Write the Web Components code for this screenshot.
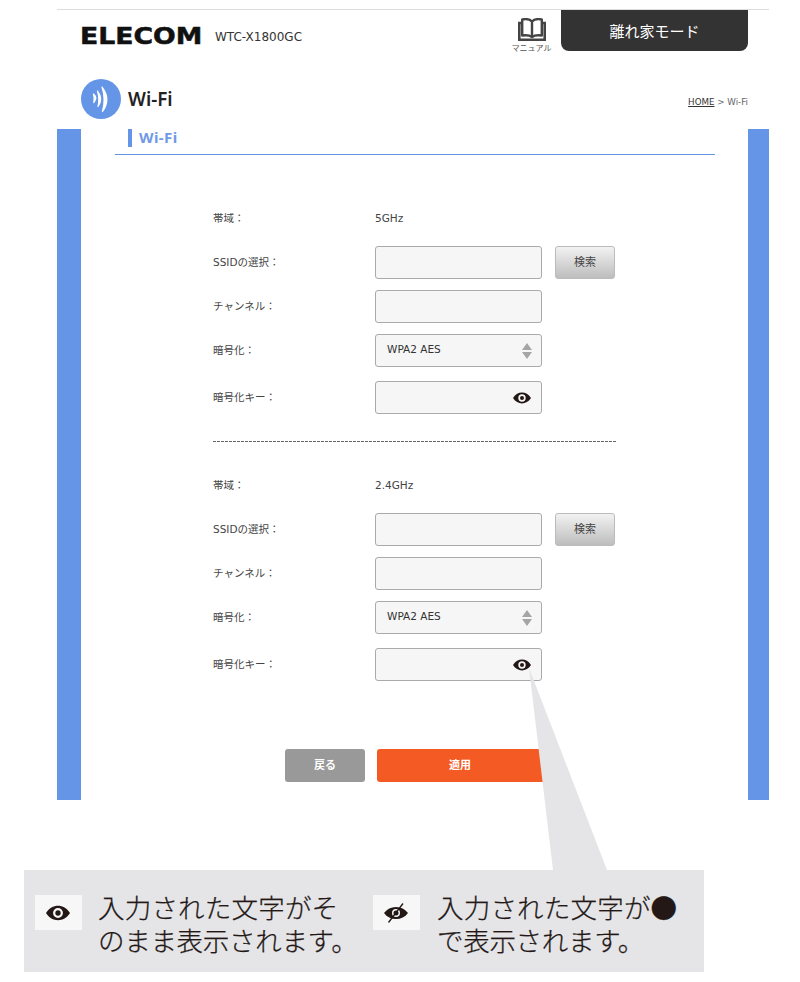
<!DOCTYPE html>
<html lang="ja">
<head>
<meta charset="utf-8">
<title>Wi-Fi</title>
<style>
  html, body { margin: 0; background: #fff; }
  body {
    position: relative;
    height: 982px;
    overflow: hidden;
    padding: 9px 31px 0 57px;
    box-sizing: border-box;
    font-family: "DejaVu Sans", "Noto Sans CJK JP", sans-serif;
    color: #333;
  }
</style>
</head>
<body>
<wifi-page>
  <site-header></site-header>
  <page-title>Wi-Fi</page-title>
  <page-main>
    <section-title>Wi-Fi</section-title>
    <band-form band="5GHz"></band-form>
    <dash-line></dash-line>
    <band-form band="2.4GHz"></band-form>
    <form-actions></form-actions>
  </page-main>
</wifi-page>
<eye-callout></eye-callout>

<script>
const eyeIcon = (w, h) => `<svg viewBox="0 0 18 12" width="${w}" height="${h}" aria-hidden="true">
  <path fill="#231815" fill-rule="evenodd" d="M0 6C2.400 2.200 5.500 .6 9 .6S15.600 2.200 18 6c-2.400 3.800-5.500 5.400-9 5.400S2.400 9.800 0 6zM9 2.300a3.700 3.700 0 1 0 0 7.400 3.700 3.700 0 0 0 0-7.400z"/>
  <circle cx="9" cy="6" r="2" fill="#231815"/>
</svg>`;

class WifiPage extends HTMLElement {
  connectedCallback() {
    this.attachShadow({ mode: 'open' });
    this.shadowRoot.innerHTML = `
      <style>
        :host { display: block; width: 712px; border-top: 1px solid #ddd; }
      </style>
      <slot></slot>`;
  }
}

class SiteHeader extends HTMLElement {
  connectedCallback() {
    this.attachShadow({ mode: 'open' });
    this.shadowRoot.innerHTML = `
      <style>
        :host { display: flex; height: 59px; padding: 0 21px 0 24px; align-items: flex-start; }
        .brand { display: flex; align-items: center; height: 51px; flex: 1; }
        .logo {
          width: 135px; margin: 2px 0 0 -1px;
          font: 900 23px/1 "DejaVu Sans", sans-serif;
          color: #111;
          transform: scaleX(1.16);
          transform-origin: left center;
          -webkit-text-stroke: .5px #111;
        }
        .model { font-size: 12px; color: #333; margin-top: 2px; }
        .manual {
          width: 39px; margin-right: 10px; display: flex; flex-direction: column; align-items: center;
          padding-top: 8px; font-size: 8px; color: #555; line-height: 10px; white-space: nowrap;
        }
        .manual svg { display: block; margin-bottom: 3px; }
        .away {
          width: 187px; height: 41px; background: #333; color: #fff;
          border-radius: 0 0 8px 8px;
          display: flex; align-items: center; justify-content: center;
          font-size: 15px;
        }
      </style>
      <div class="brand">
        <div class="logo">ELECOM</div>
        <div class="model">WTC-X1800GC</div>
      </div>
      <div class="manual">
        <svg viewBox="0 0 28 23" width="28" height="23" aria-hidden="true">
          <path fill="#fff" stroke="#444" stroke-width="2.400" stroke-linejoin="round" d="M14 3.500C12 1.500 7.500 .8 4.200 1.500V17.500C8 17 12 17.500 14 19 16 17.500 20 17 23.800 17.500V1.500C20.500 .8 16 1.500 14 3.500ZM14 3.500V19"/>
          <path fill="none" stroke="#444" stroke-width="2.600" d="M4 5H1.300V21.700H26.700V5H24"/>
        </svg>
        マニュアル
      </div>
      <div class="away">離れ家モード</div>`;
  }
}

class PageTitle extends HTMLElement {
  connectedCallback() {
    this.attachShadow({ mode: 'open' });
    this.shadowRoot.innerHTML = `
      <style>
        :host { display: flex; align-items: center; height: 40px; padding: 10px 21px 10px 24px; }
        h1 { margin: 0 0 0 7px; font: 600 18.800px "Noto Sans", sans-serif; color: #222; flex: 1; }
        .crumb { font-size: 8.700px; color: #666; margin-top: 6px; }
        .crumb u { color: #333; }
        svg { display: block; }
      </style>
      <svg viewBox="0 0 40 40" width="40" height="40" aria-hidden="true">
        <circle cx="20" cy="20" r="20" fill="#6595e6"/>
        <g fill="#fff" stroke="#fff" stroke-width="1.200" stroke-linejoin="round">
          <path d="M12.500 15Q17 19 12.800 23.500Q13.800 19 12.500 15Z"/>
          <path d="M16.500 12Q22.500 19.500 17 27.500Q18.800 19.500 16.500 12Z"/>
          <path d="M21 8Q30.500 20 21.500 32.500Q25 20 21 8Z"/>
        </g>
      </svg>
      <h1><slot></slot></h1>
      <div class="crumb"><u>HOME</u> &gt; Wi-Fi</div>`;
  }
}

class PageMain extends HTMLElement {
  connectedCallback() {
    this.attachShadow({ mode: 'open' });
    this.shadowRoot.innerHTML = `
      <style>
        :host {
          display: block; height: 671px; box-sizing: border-box;
          background: #fff;
          border-left: 24px solid #6595e6;
          border-right: 21px solid #6595e6;
        }
      </style>
      <slot></slot>`;
  }
}

class SectionTitle extends HTMLElement {
  connectedCallback() {
    this.attachShadow({ mode: 'open' });
    this.shadowRoot.innerHTML = `
      <style>
        :host {
          display: block; margin: 0 33px 47px 34px; height: 25px;
          padding-left: 13px; border-bottom: 1px solid #6595e6;
        }
        div {
          border-left: 4px solid #6595e6; padding-left: 7px; height: 18px;
          font: 700 15px/16px "Noto Sans", sans-serif; letter-spacing: .4px; color: #6f9ae6;
        }
      </style>
      <div><slot></slot></div>`;
  }
}

class BandForm extends HTMLElement {
  connectedCallback() {
    this.attachShadow({ mode: 'open' });
    const band = this.getAttribute('band');
    this.shadowRoot.innerHTML = `
      <style>
        :host {
          display: grid; grid-template-columns: 162px 167px 73px;
          grid-template-rows: 33px 33px 33px 33px 36px; row-gap: 11px; margin-left: 132px;
          font-size: 10.500px; color: #444; align-items: center;
        }
        .lbl { padding-bottom: 3px; }
        .mid { padding-bottom: 2px; }
        .val { padding-bottom: 2px; grid-column: 2 / 4; }
        search-button { margin-left: 13px; }
        .key { align-self: end; }
        .lbl.key { height: 33px; display: flex; align-items: center; box-sizing: border-box; padding-bottom: 2px; }
      </style>
      <div class="lbl">帯域：</div><div class="val">${band}</div>
      <div class="lbl">SSIDの選択：</div><field-box></field-box><search-button>検索</search-button>
      <div class="lbl mid">チャンネル：</div><field-box></field-box><div></div>
      <div class="lbl">暗号化：</div><field-box kind="select">WPA2 AES</field-box><div></div>
      <div class="lbl key">暗号化キー：</div><field-box class="key" kind="eye"></field-box><div></div>`;
  }
}

class FieldBox extends HTMLElement {
  connectedCallback() {
    this.attachShadow({ mode: 'open' });
    const kind = this.getAttribute('kind');
    let right = '';
    if (kind === 'select') {
      right = `<svg viewBox="0 0 10 16" width="10" height="16" aria-hidden="true"><path fill="#a5a5a5" d="M5 0l5 7H0zM0 9h10l-5 7z"/></svg>`;
    } else if (kind === 'eye') {
      right = eyeIcon(18, 12);
    }
    this.shadowRoot.innerHTML = `
      <style>
        :host {
          display: flex; align-items: center; justify-content: space-between;
          width: 167px; height: 33px; box-sizing: border-box;
          background: #f6f6f6; border: 1px solid #aaa; border-radius: 3px;
          padding: 0 ${kind === 'eye' ? 10 : 9}px 0 11px;
          font-size: 10.500px; color: #333;
        }
        span { margin-top: -3px; }
        svg { display: block; }
      </style>
      <span><slot></slot></span>${right}`;
  }
}

class SearchButton extends HTMLElement {
  connectedCallback() {
    this.attachShadow({ mode: 'open' });
    this.shadowRoot.innerHTML = `
      <style>
        :host {
          display: flex; align-items: center; justify-content: center;
          height: 33px; border: 1px solid #bbb; border-radius: 3px;
          background: linear-gradient(#f2f2f2, #bdbdbd);
          font-size: 11px; color: #444; padding-bottom: 4px; box-sizing: border-box;
        }
      </style>
      <slot></slot>`;
  }
}

class DashLine extends HTMLElement {
  connectedCallback() {
    this.attachShadow({ mode: 'open' });
    this.shadowRoot.innerHTML = `
      <style>
        :host {
          display: block; margin: 27px 132px 27px 132px; width: 403px; height: 1px;
          background: repeating-linear-gradient(90deg, #666 0 3px, transparent 3px 4px);
        }
      </style>`;
  }
}

class FormActions extends HTMLElement {
  connectedCallback() {
    this.attachShadow({ mode: 'open' });
    this.shadowRoot.innerHTML = `
      <style>
        :host { display: flex; gap: 12px; margin: 68px 0 0 204px; }
        div {
          height: 33px; border-radius: 3px; color: #fff; font-size: 11px; font-weight: 700;
          display: flex; align-items: center; justify-content: center; padding-bottom: 4px; box-sizing: border-box;
        }
        .back { width: 80px; background: #999; }
        .apply { width: 166px; background: #f45a24; border-radius: 3px 0 0 3px; box-shadow: 9px 0 0 #f45a24; }
      </style>
      <div class="back">戻る</div>
      <div class="apply">適用</div>`;
  }
}

class EyeCallout extends HTMLElement {
  connectedCallback() {
    this.attachShadow({ mode: 'open' });
    this.shadowRoot.innerHTML = `
      <style>
        :host { display: block; position: absolute; left: 0; top: 0; width: 800px; height: 982px; pointer-events: none; }
        svg.tail { position: absolute; left: 0; top: 0; }
        .note {
          position: absolute; left: 24px; top: 870px; width: 680px; height: 102px;
          box-sizing: border-box; padding: 25px 0 0 11px;
          background: #e5e5e8; display: flex; color: #231815;
          font: 300 26.500px/33px "Noto Sans CJK JP", sans-serif;
          -webkit-text-stroke: .25px #231815;
        }
        .item { display: flex; align-items: flex-start; }
        .item.a { width: 338px; }
        .chip {
          width: 47px; height: 35px; flex: none; background: #f7f7f7; box-sizing: border-box; padding-right: 2px;
          display: flex; align-items: center; justify-content: center;
        }
        .item.a .chip { margin-right: 16px; }
        .item.b .chip { margin-right: 17px; }
        p { margin: -5px 0 0; white-space: nowrap; letter-spacing: .2px; }
        .tight { letter-spacing: -.3px; }
      </style>
      <svg class="tail" width="800" height="982" aria-hidden="true"><polygon points="529,668 607,870 553,870" fill="#e5e5e8"/></svg>
      <div class="note">
        <div class="item a">
          <div class="chip">${eyeIcon(24, 16)}</div>
          <p>入力された文字がそ<br><span class="tight">のまま表示されます。</span></p>
        </div>
        <div class="item b">
          <div class="chip">
            <svg viewBox="0 0 24 20" width="24" height="20" aria-hidden="true">
              <path fill="#231815" fill-rule="evenodd" d="M0 10C3 6 7 4 12 4s9 2 12 6c-3 4-7 6-12 6S3 14 0 10zM12 6a4 4 0 1 0 0 8 4 4 0 0 0 0-8z"/>
              <circle cx="12" cy="10" r="2.500" fill="#231815"/>
              <path stroke="#231815" stroke-width="1.300" d="M4.500 19.500L19 .5"/>
            </svg>
          </div>
          <p>入力された文字が●<br><span class="tight">で表示されます。</span></p>
        </div>
      </div>`;
  }
}

customElements.define('wifi-page', WifiPage);
customElements.define('site-header', SiteHeader);
customElements.define('page-title', PageTitle);
customElements.define('page-main', PageMain);
customElements.define('section-title', SectionTitle);
customElements.define('band-form', BandForm);
customElements.define('field-box', FieldBox);
customElements.define('search-button', SearchButton);
customElements.define('dash-line', DashLine);
customElements.define('form-actions', FormActions);
customElements.define('eye-callout', EyeCallout);
</script>
</body>
</html>
